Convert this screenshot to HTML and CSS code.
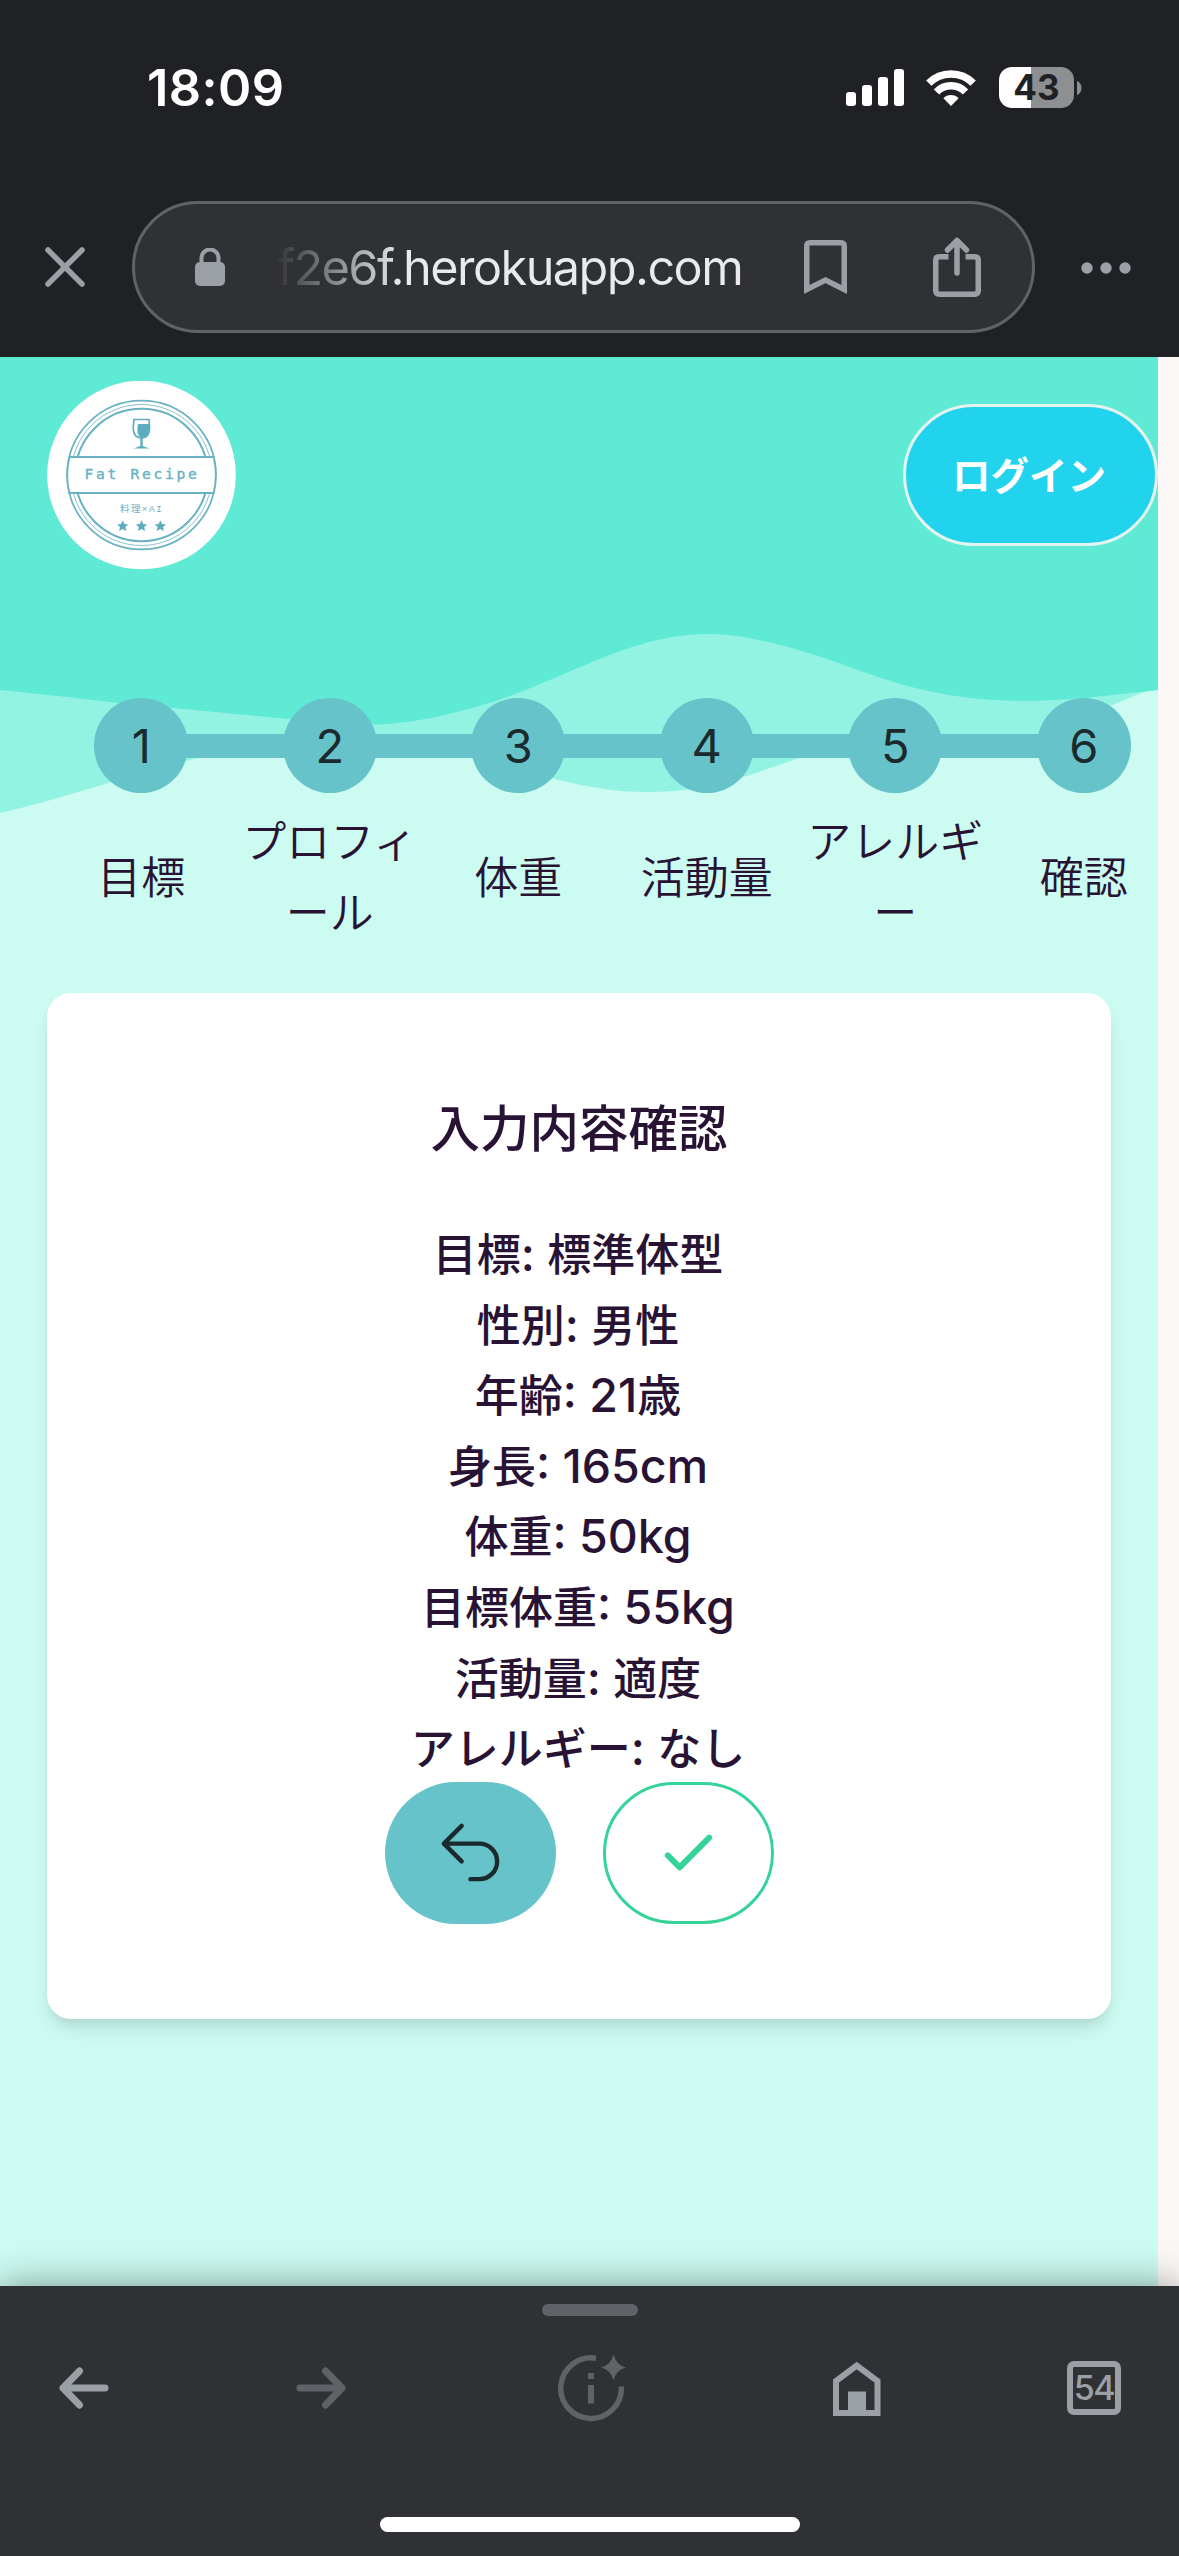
FILE: index.html
```html
<!DOCTYPE html>
<html lang="ja">
<head>
<meta charset="utf-8">
<title>Fat Recipe</title>
<link rel="stylesheet" href="styles.css">
</head>
<body>
<div class="screen">
  <div class="status">
    <span class="clock">18:09</span>
    <div class="status-icons">
      <svg width="59" height="38" viewBox="0 0 59 38" fill="#fff"><rect x="0" y="23" width="10" height="14" rx="3"/><rect x="16" y="16" width="10" height="21" rx="3"/><rect x="32" y="8" width="10" height="29" rx="3"/><rect x="48" y="0" width="10" height="37" rx="3"/></svg>
      <svg class="wifi" width="50" height="38" viewBox="0 0 50 38" fill="none" stroke="#fff" stroke-width="7.500"><path d="M2.800 14.200A31.500 31.500 0 0 1 47.200 14.200"/><path d="M10.500 23A20 20 0 0 1 39.500 23"/><path d="M25 37l-7.600-7.800a10.800 10.800 0 0 1 15.200 0z" fill="#fff" stroke="none"/></svg>
      <div class="battery"><span>43</span></div>
      <svg class="nub" width="5" height="14" viewBox="0 0 5 14"><path d="M0 0c6 2 6 12 0 14z" fill="#8e8f91"/></svg>
    </div>
  </div>

  <div class="toolbar">
    <svg class="close" width="40" height="40" viewBox="0 0 40 40" stroke="#9aa0a6" stroke-width="5.500" stroke-linecap="round"><path d="M3 3l34 34M37 3L3 37"/></svg>
    <div class="address">
      <svg class="lock" width="30" height="38" viewBox="0 0 30 38"><rect x="0" y="14" width="30" height="24" rx="5" fill="#9aa0a6"/><path d="M6.500 17v-7a8.500 8.500 0 0 1 17 0v7" fill="none" stroke="#9aa0a6" stroke-width="4"/></svg>
      <span class="url">f2e6f.herokuapp.com</span>
      <svg class="bookmark" width="43" height="55" viewBox="0 0 43 55" fill="none" stroke="#9aa0a6" stroke-width="5.500"><path d="M2.750 49.500V6q0-3.250 3.250-3.250h31q3.250 0 3.250 3.250v43.500L21.500 40z"/></svg>
      <svg class="share" width="48" height="60" viewBox="0 0 48 60" fill="none" stroke="#9aa0a6" stroke-width="5.500" stroke-linejoin="round"><path d="M15.500 19.700H6.500q-3.750 0-3.750 3.750V53.500q0 3.750 3.750 3.750h35q3.750 0 3.750-3.750V23.450q0-3.750-3.750-3.750h-9"/><path d="M24 36V4M14.500 13L24 3.500 33.500 13" stroke-linecap="round"/></svg>
    </div>
    <svg class="more" width="50" height="12" viewBox="0 0 50 12" fill="#9aa0a6"><circle cx="6" cy="6" r="5.700"/><circle cx="25" cy="6" r="5.700"/><circle cx="44" cy="6" r="5.700"/></svg>
  </div>

  <main class="page">
    <svg class="waves" width="1158" height="470" viewBox="0 0 1158 470">
      <path fill="#92f3e2" d="M0 0H1158V331C1120 340 1060 378 1000 386C920 390 860 388 800 401C750 416 720 435 648 435C570 435 520 406 440 396C380 386 290 381 203 400C140 414 60 443 0 456Z"/>
      <path fill="#5eead4" d="M0 0H1158V333C1110 338 1070 344 1020 344C950 343 905 330 852 311C800 292 750 277 706 277C630 277 560 325 486 347C440 361 400 367.500 372 367.500C320 366 230 356 119 346C80 341 40 337 0 333Z"/>
    </svg>

    <header class="header">
      <svg class="logo" width="189" height="189" viewBox="0 0 189 189">
        <circle cx="94.500" cy="94" r="94.300" fill="#fff"/>
        <g fill="none" stroke="#68b2c3">
          <circle cx="94.500" cy="94" r="74.300" stroke-width="1.700"/>
          <circle cx="94.500" cy="94" r="70.500" stroke-width=".8"/>
          <circle cx="94.500" cy="94" r="66.200" stroke-width="2"/>
        </g>
        <path d="M20.200 94a74.300 74.300 0 0 1 2.200-18H166.600a74.300 74.300 0 0 1 0 36H22.400a74.300 74.300 0 0 1-2.200-18z" fill="#fff" stroke="#68b2c3" stroke-width="1.800"/>
        <path d="M87 38.500h15c1 8 2 18-7.500 18.500C84.500 56.500 86 46 87 38.500z" fill="none" stroke="#5cadc0" stroke-width="1.700"/>
        <path d="M91 43h11c1 7 1 13-6.500 13.500C89.500 56 90 49 91 43zM93.300 56h2.400v9l6.800 2.500H86.500l6.800-2.500z" fill="#5cadc0"/>
        <text class="logo-name" x="37.500" y="98">Fat Recipe</text>
        <text class="logo-sub" x="73" y="130.500">料理×AI</text>
        <g fill="#5cadc0">
          <path id="star" d="M75.700 139.300l1.700 3.700 4 .4-3 2.700.9 4-3.600-2.100-3.600 2.100.9-4-3-2.700 4-.4z"/>
          <use href="#star" x="18.800"/>
          <use href="#star" x="37.600"/>
        </g>
      </svg>
      <button class="login"><span>ログイン</span></button>
    </header>

    <ol class="steps">
      <li><b>1</b><span>目標</span></li>
      <li><b>2</b><span>プロフィール</span></li>
      <li><b>3</b><span>体重</span></li>
      <li><b>4</b><span>活動量</span></li>
      <li><b>5</b><span>アレルギー</span></li>
      <li><b>6</b><span>確認</span></li>
    </ol>

    <section class="card">
      <h1>入力内容確認</h1>
      <p>目標<i>: </i>標準体型</p>
      <p>性別<i>: </i>男性</p>
      <p>年齢<i>: 21</i>歳</p>
      <p>身長<i>: 165cm</i></p>
      <p>体重<i>: 50kg</i></p>
      <p>目標体重<i>: 55kg</i></p>
      <p>活動量<i>: </i>適度</p>
      <p>アレルギー<i>: </i>なし</p>
      <div class="actions">
        <button class="btn back"><svg width="71" height="71" viewBox="0 0 24 24" fill="none" stroke="#1b2a2c" stroke-width="1.500" stroke-linecap="round" stroke-linejoin="round"><path d="M9 15L3 9m0 0l6-6M3 9h12a6 6 0 0 1 0 12h-3"/></svg></button>
        <button class="btn confirm"><svg width="71" height="71" viewBox="0 0 24 24" fill="none" stroke="#36d399" stroke-width="2" stroke-linecap="round" stroke-linejoin="round"><path d="M5 13l4 4L19 7"/></svg></button>
      </div>
    </section>
  </main>

  <nav class="bottom">
    <div class="handle"></div>
    <div class="nav-icons">
      <svg width="50" height="42" viewBox="0 0 50 42" fill="none" stroke="#9aa0a6" stroke-width="7" stroke-linecap="round" stroke-linejoin="round"><path d="M46 21H4M20.500 4L4 21l16.500 17"/></svg>
      <svg class="forward" width="50" height="42" viewBox="0 0 50 42" fill="none" stroke="#5f6368" stroke-width="7" stroke-linecap="round" stroke-linejoin="round"><path d="M4 21h42M29.500 4L46 21 29.500 38"/></svg>
      <svg class="info" width="70" height="68" viewBox="0 0 70 68"><path d="M38 4.300A30.300 30.300 0 1 0 63.300 32.500" fill="none" stroke="#5f6368" stroke-width="5.500"/><path d="M30 19h6v6h-6zM30 31h6v18.500h-6zM55.500.5q2.500 10.500 12.500 13-10 2.500-12.500 13-2.500-10.500-12.500-13 10-2.500 12.500-13z" fill="#5f6368"/></svg>
      <svg class="home" width="48" height="55" viewBox="0 0 48 55"><path d="M3 52V20L23.700 4.500 44.500 20v32z" fill="none" stroke="#9aa0a6" stroke-width="6"/><path d="M15 30.500h18V52H15z" fill="#9aa0a6"/></svg>
      <div class="tabs">54</div>
    </div>
    <div class="home-indicator"></div>
  </nav>
</div>
</body>
</html>
```
FILE: styles.css
```css
* { box-sizing: border-box; }

body {
  margin: 0;
  background: #fbf7f7;
  font-family: Inter, "Noto Sans CJK JP", sans-serif;
}

svg { display: block; flex: none; }

button {
  font: inherit;
  padding: 0;
  border: 0;
  display: flex;
  align-items: center;
  justify-content: center;
}

.screen {
  width: 1179px;
  height: 2556px;
  display: flex;
  flex-direction: column;
  overflow: hidden;
}

/* Phone status bar */
.status {
  height: 201px;
  flex: none;
  background: #202124;
  display: flex;
  justify-content: space-between;
  padding: 0 97px 26px 147px;
  align-items: center;
}

.clock {
  color: #fff;
  font-size: 50.5px;
  font-weight: 600;
  letter-spacing: 0.4px;
}

.status-icons { display: flex; align-items: center; }
.wifi { margin-left: 21px; }

.battery {
  width: 75px;
  height: 41px;
  margin-left: 23px;
  border-radius: 13px;
  background: linear-gradient(90deg, #fff 43%, #8e8f91 43%);
  color: #202124;
  font-size: 35px;
  font-weight: 700;
  line-height: 41px;
  text-align: center;
}

.nub { margin-left: 3px; }

/* Browser toolbar */
.toolbar {
  height: 156px;
  flex: none;
  background: #202124;
  display: flex;
  align-items: flex-start;
  padding-left: 45px;
}

.close { margin-top: 46px; }

.address {
  width: 903px;
  height: 132px;
  margin-left: 47px;
  padding-left: 60px;
  border: 3px solid #5f6368;
  border-radius: 66px;
  background: #303134;
  display: flex;
  align-items: center;
}

.url {
  width: 470px;
  margin-left: 52px;
  font-size: 48.6px;
  letter-spacing: -1.55px;
  white-space: nowrap;
  color: transparent;
  background: linear-gradient(90deg, #34353a 0, #e8eaed 125px);
  background-clip: text;
  -webkit-background-clip: text;
}

.bookmark { margin-left: 57px; }
.share { margin-left: 86px; }
.more { margin: 61px 0 0 46px; }

/* Web page */
.page {
  position: relative;
  width: 1158px;
  height: 1929px;
  flex: none;
  background: #ccfbf1;
}

.waves { position: absolute; left: 0; top: 0; }

.header {
  position: relative;
  height: 341px;
  padding: 24px 0 0 47px;
  display: flex;
  justify-content: space-between;
  align-items: flex-start;
}

.logo-name {
  font: 14.6px "DejaVu Sans Mono", monospace;
  letter-spacing: 2.7px;
  fill: #68b2c3;
  stroke: #68b2c3;
  stroke-width: .4px;
}

.logo-sub {
  font: 9.5px "Liberation Mono", "Noto Sans CJK JP", monospace;
  letter-spacing: 1.4px;
  fill: #68b2c3;
}

.login {
  width: 255px;
  height: 142px;
  margin-top: 23px;
  padding: 0 3px 4px 0;
  border: 3px solid #e4f3f0;
  border-radius: 71px;
  background: #22d3ee;
  color: #fff;
  font-size: 38.5px;
  font-weight: 700;
}

.steps {
  position: relative;
  width: 1131px;
  height: 295px;
  margin: 0 0 0 47px;
  padding: 0;
  list-style: none;
  display: grid;
  grid-template-columns: repeat(6, 1fr);
}

.steps li {
  display: grid;
  grid-template-rows: 95px 164px;
  justify-items: center;
  align-content: start;
  align-items: center;
  background: linear-gradient(#66c3c9, #66c3c9) no-repeat 0 36px / 100% 24px;
  color: #291334;
}

.steps li:first-child { background-position: 94px 36px; }
.steps li:last-child { background-size: 50% 24px; }

.steps b {
  width: 94px;
  height: 95px;
  border-radius: 50%;
  background: #66c3c9;
  color: #1b2a2c;
  font-size: 47px;
  font-weight: 400;
  line-height: 96px;
  text-align: center;
}

.steps span {
  font-size: 44px;
  line-height: 70.7px;
  text-align: center;
  font-family: "Noto Sans CJK JP", sans-serif;
  font-weight: 350;
  line-break: anywhere;
}

.card {
  position: relative;
  width: 1064px;
  height: 1026px;
  margin-left: 47px;
  padding-top: 92px;
  border-radius: 24px;
  background: #fff;
  box-shadow: 0 12px 18px -3px rgba(0, 0, 0, .1), 0 6px 12px -6px rgba(0, 0, 0, .1);
  color: #291334;
  text-align: center;
}

.card h1 {
  margin: 0 0 50px;
  font-size: 49.5px;
  font-weight: 500;
  line-height: 82px;
  font-family: "Noto Sans CJK JP", sans-serif;
}

.card p {
  margin: 0;
  height: 70.6px;
  padding-right: 2px;
  font-size: 44px;
  font-weight: 500;
  line-height: 70.6px;
  font-family: "Noto Sans CJK JP", sans-serif;
  white-space: pre;
}

.card i {
  font-family: Inter, sans-serif;
  font-style: normal;
  font-size: 46.5px;
  line-height: 1;
}

.actions { display: flex; justify-content: center; gap: 47px; }

.btn {
  width: 171px;
  height: 142px;
  border-radius: 71px;
}

.back { background: #66c3c9; }
.confirm { background: #fff; border: 3px solid #36d399; }

/* Browser bottom bar */
.bottom {
  position: relative;
  height: 270px;
  flex: none;
  background: #303134;
  box-shadow: 0 0 36px rgba(0, 0, 0, .4);
}

.handle {
  width: 96px;
  height: 12px;
  margin: 0 auto;
  border-radius: 6px;
  background: #5f6368;
  transform: translateY(18px);
}

.nav-icons {
  height: 180px;
  padding-left: 59px;
  display: flex;
  align-items: center;
}

.forward { margin-left: 187px; }
.info { margin-left: 212px; }
.home { margin-left: 205px; }

.tabs {
  width: 54px;
  height: 54px;
  margin-left: 186px;
  border: 6px solid #9aa0a6;
  border-radius: 7px;
  color: #9aa0a6;
  font-size: 34px;
  line-height: 42px;
  font-weight: 500;
  letter-spacing: -1.5px;
  display: flex;
  justify-content: center;
}

.home-indicator {
  width: 420px;
  height: 15px;
  margin: 39px auto 0;
  border-radius: 8px;
  background: #fff;
}
```
